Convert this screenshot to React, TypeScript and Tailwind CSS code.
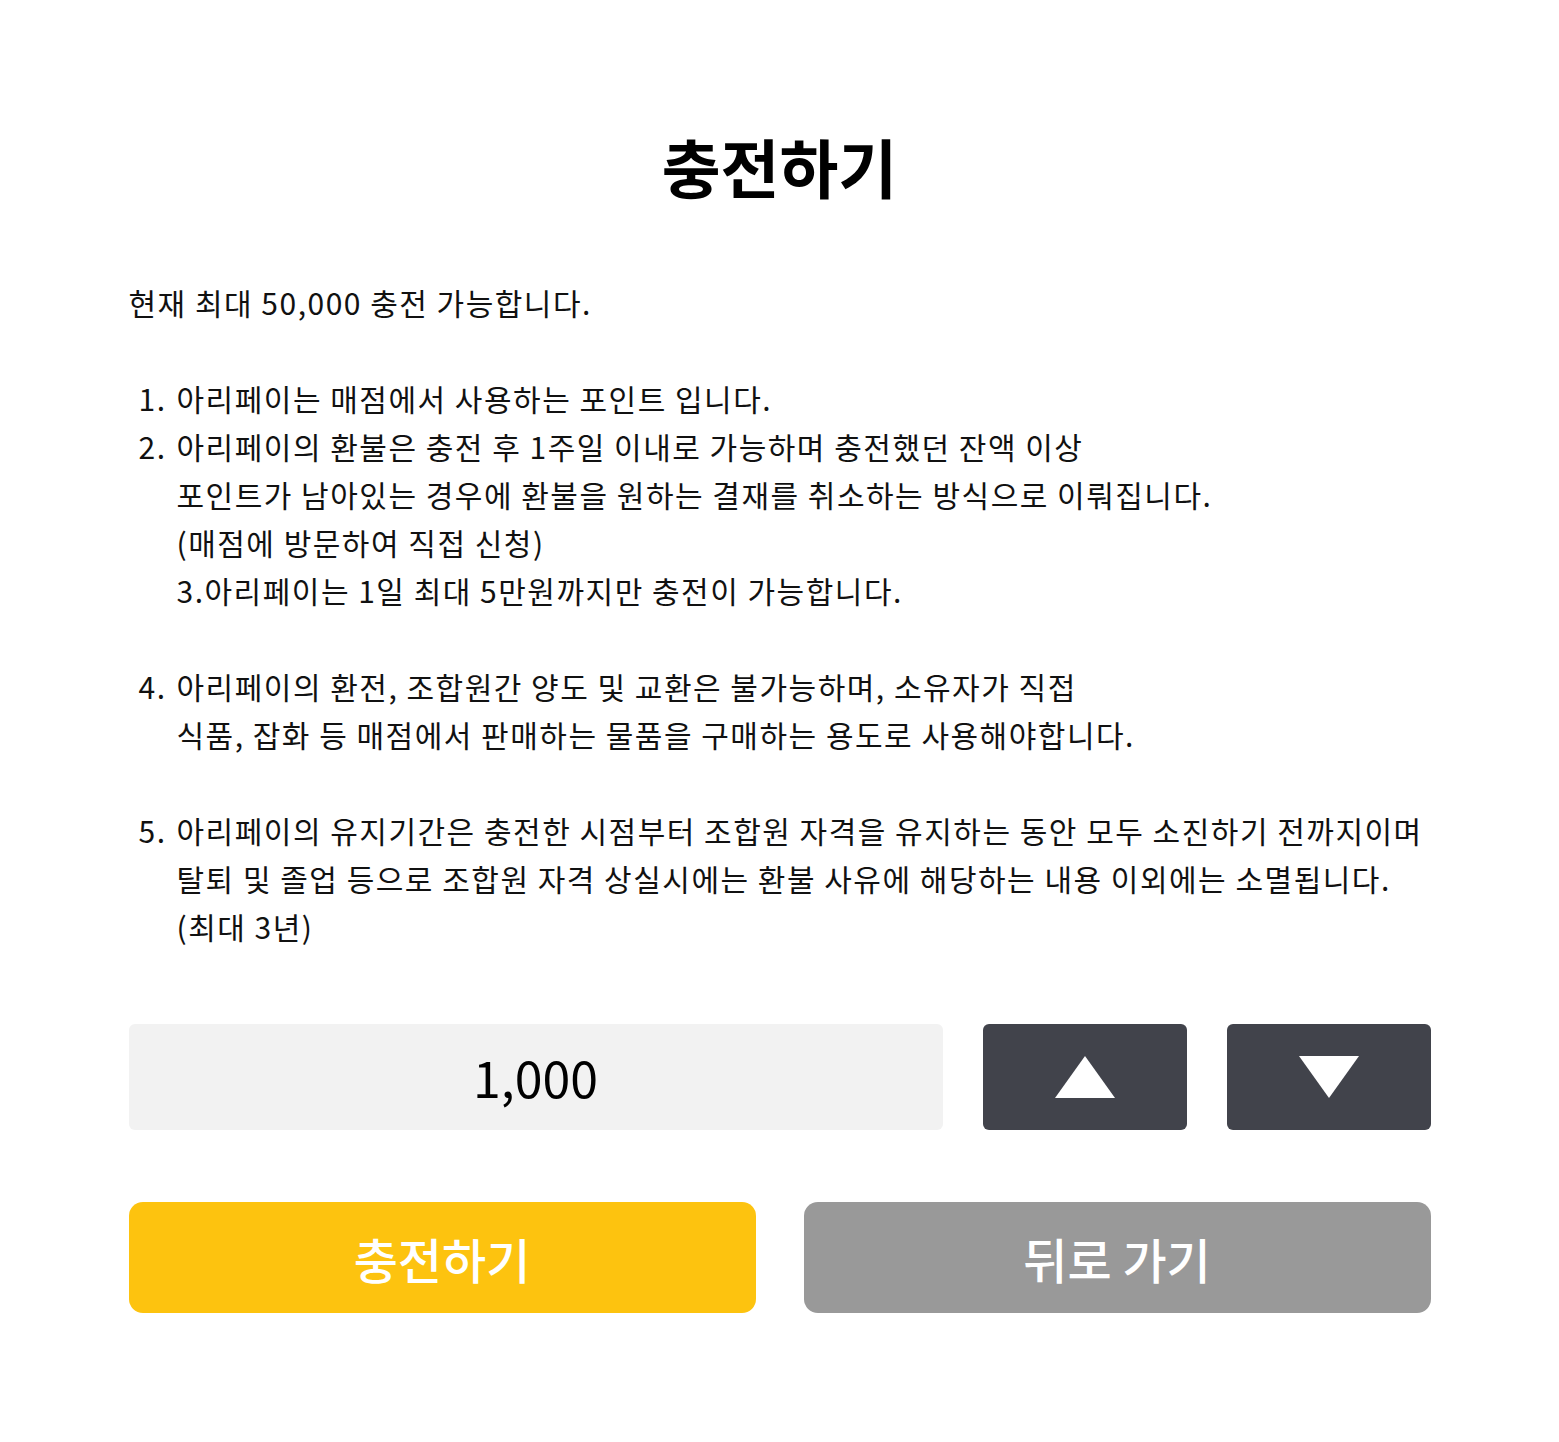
import React from "react";

const font = { fontFamily: '"Noto Sans CJK KR", "Noto Sans", sans-serif' };

export default function App() {
  return (
    <div className="min-h-[1442px] w-full bg-white text-black" style={font}>
      <div className="mx-auto w-[1302px] pt-[122px]">
        <h1 className="text-center text-[64px] font-bold leading-[86px]">충전하기</h1>
        <div className="mt-[70px] text-[30px] leading-[48px] tracking-[1.5px] text-[#111]">
          <p>현재 최대 50,000 충전 가능합니다.</p>
          <div className="h-[48px]" />
          <div className="flex">
            <span className="w-[48px] shrink-0 pl-[10px]">1.</span>
            <p>아리페이는 매점에서 사용하는 포인트 입니다.</p>
          </div>
          <div className="flex">
            <span className="w-[48px] shrink-0 pl-[10px]">2.</span>
            <p>
              아리페이의 환불은 충전 후 1주일 이내로 가능하며 충전했던 잔액 이상
              <br />
              포인트가 남아있는 경우에 환불을 원하는 결재를 취소하는 방식으로 이뤄집니다.
              <br />
              (매점에 방문하여 직접 신청)
              <br />
              3.아리페이는 1일 최대 5만원까지만 충전이 가능합니다.
            </p>
          </div>
          <div className="h-[48px]" />
          <div className="flex">
            <span className="w-[48px] shrink-0 pl-[10px]">4.</span>
            <p>
              아리페이의 환전, 조합원간 양도 및 교환은 불가능하며, 소유자가 직접
              <br />
              식품, 잡화 등 매점에서 판매하는 물품을 구매하는 용도로 사용해야합니다.
            </p>
          </div>
          <div className="h-[48px]" />
          <div className="flex">
            <span className="w-[48px] shrink-0 pl-[10px]">5.</span>
            <p className="whitespace-nowrap">
              아리페이의 유지기간은 충전한 시점부터 조합원 자격을 유지하는 동안 모두 소진하기 전까지이며
              <br />
              탈퇴 및 졸업 등으로 조합원 자격 상실시에는 환불 사유에 해당하는 내용 이외에는 소멸됩니다.
              <br />
              (최대 3년)
            </p>
          </div>
        </div>

        <div className="mt-[74px] flex h-[106px] gap-[40px]">
          <div className="flex w-[814px] items-center justify-center rounded-[6px] bg-[#f2f2f2] pb-[2px] text-[50px] text-black">
            1,000
          </div>
          <button className="flex w-[204px] items-center justify-center rounded-[6px] bg-[#41434b]">
            <svg width="60" height="42" viewBox="0 0 60 42">
              <polygon points="30,0 60,42 0,42" fill="#fff" />
            </svg>
          </button>
          <button className="flex w-[204px] items-center justify-center rounded-[6px] bg-[#41434b]">
            <svg width="60" height="42" viewBox="0 0 60 42">
              <polygon points="0,0 60,0 30,42" fill="#fff" />
            </svg>
          </button>
        </div>

        <div className="mt-[72px] flex h-[111px] gap-[48px]">
          <button className="flex flex-1 items-center justify-center rounded-[14px] bg-[#fdc30f] text-[48px] font-medium text-white">
            충전하기
          </button>
          <button className="flex flex-1 items-center justify-center rounded-[14px] bg-[#999999] text-[48px] font-medium text-white">
            뒤로 가기
          </button>
        </div>
      </div>
    </div>
  );
}
